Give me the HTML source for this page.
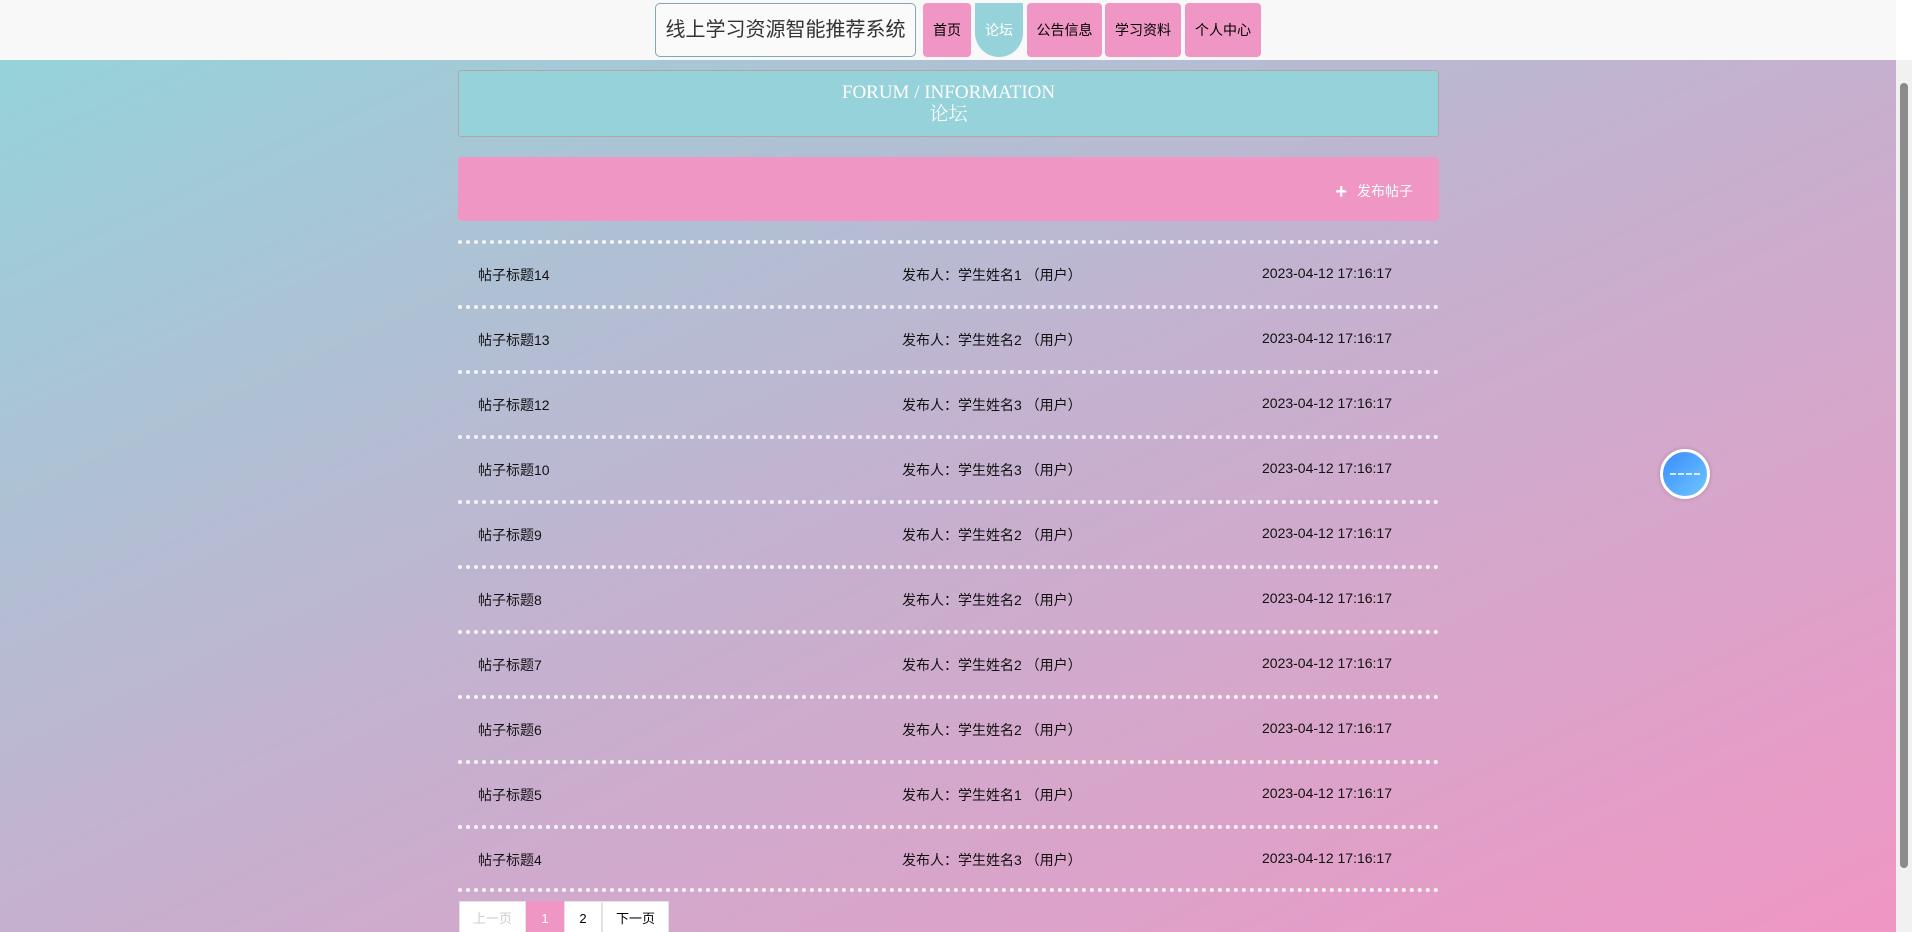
<!DOCTYPE html>
<html><head><meta charset="utf-8"><style>
*{margin:0;padding:0;box-sizing:border-box}
html,body{width:1912px;height:932px;overflow:hidden}
body{font-family:"Liberation Sans","Noto Sans CJK SC",sans-serif;background:#fff;position:relative}
.hdr{position:absolute;left:0;top:0;width:1896px;height:60px;background:#f8f8f8}
.title{position:absolute;left:655px;top:3px;width:261px;height:54px;border:1px solid #7fa9b0;border-radius:5px;font-size:20px;color:#333;text-align:center;line-height:52px;background:#fafafa}
.nav{position:absolute;top:3px;height:54px;background:#f096c4;border-radius:4px;font-size:14px;color:#000;text-align:center;line-height:54px}
.main{position:absolute;left:0;top:60px;width:1896px;height:872px;background:linear-gradient(155deg,#95d3da 0%,#c6b0cf 50%,#f096c4 100%)}
.fh{position:absolute;left:458px;top:10px;width:981px;height:67px;background:#96d2d9;border:1px solid #b0a5a8;border-radius:3px;color:#fff;text-align:center;font-family:"Liberation Serif","Noto Serif CJK SC",serif;font-size:19px;line-height:22px;padding-top:11px}
.pink{position:absolute;left:458px;top:97px;width:981px;height:64px;background:#f096c4;border-radius:4px;color:#fff;font-size:14px}
.pink span{position:absolute;right:26px;top:24px}
.dot{position:absolute;left:458px;width:981px;border-top:4px dotted #f4f4f4}
.row{position:absolute;left:0;width:1896px;font-size:14px;color:#111}
.row span{position:absolute}
.pg{position:absolute;top:901px;height:31px;background:#fff;border:1px solid #e4e4e4;border-bottom:none;font-size:13px;text-align:center;line-height:34px;overflow:hidden}
.sb{position:absolute;right:0;top:60px;width:16px;height:872px;background:#f1f1f1}
.thumb{position:absolute;right:4px;top:23px;width:8px;height:785px;background:#8a8a8a;border-radius:4px}
.fb{position:absolute;left:1660px;top:449px;width:50px;height:50px;border-radius:50%;background:linear-gradient(135deg,#3a8cff,#6ec6ff);border:3px solid #fff;box-shadow:0 0 4px rgba(0,0,0,.2)}
.fb i{position:absolute;left:7px;right:7px;top:21px;border-top:2px dashed #d6ecff}
</style></head><body>
<div class="hdr">
<div class="title">线上学习资源智能推荐系统</div>
<div class="nav" style="left:923px;width:48px">首页</div>
<div class="nav" style="left:975px;width:48px;background:#96d2d9;color:#fff;border-radius:0 0 24px 24px">论坛</div>
<div class="nav" style="left:1027px;width:75px">公告信息</div>
<div class="nav" style="left:1105px;width:76px">学习资料</div>
<div class="nav" style="left:1185px;width:76px">个人中心</div>
</div>
<div class="main">
<div class="fh">FORUM / INFORMATION<br>论坛</div>
<div class="pink"><span><b style="font-size:20px;vertical-align:-2px;margin-right:10px">+</b>发布帖子</span></div>
</div>
<div class="dot" style="top:240px"></div><div class="row" style="top:265px"><span style="left:478px">帖子标题14</span><span style="left:902px">发布人：学生姓名1 （用户）</span><span style="left:1262px">2023-04-12 17:16:17</span></div>
<div class="dot" style="top:305px"></div><div class="row" style="top:330px"><span style="left:478px">帖子标题13</span><span style="left:902px">发布人：学生姓名2 （用户）</span><span style="left:1262px">2023-04-12 17:16:17</span></div>
<div class="dot" style="top:370px"></div><div class="row" style="top:395px"><span style="left:478px">帖子标题12</span><span style="left:902px">发布人：学生姓名3 （用户）</span><span style="left:1262px">2023-04-12 17:16:17</span></div>
<div class="dot" style="top:435px"></div><div class="row" style="top:460px"><span style="left:478px">帖子标题10</span><span style="left:902px">发布人：学生姓名3 （用户）</span><span style="left:1262px">2023-04-12 17:16:17</span></div>
<div class="dot" style="top:500px"></div><div class="row" style="top:525px"><span style="left:478px">帖子标题9</span><span style="left:902px">发布人：学生姓名2 （用户）</span><span style="left:1262px">2023-04-12 17:16:17</span></div>
<div class="dot" style="top:565px"></div><div class="row" style="top:590px"><span style="left:478px">帖子标题8</span><span style="left:902px">发布人：学生姓名2 （用户）</span><span style="left:1262px">2023-04-12 17:16:17</span></div>
<div class="dot" style="top:630px"></div><div class="row" style="top:655px"><span style="left:478px">帖子标题7</span><span style="left:902px">发布人：学生姓名2 （用户）</span><span style="left:1262px">2023-04-12 17:16:17</span></div>
<div class="dot" style="top:695px"></div><div class="row" style="top:720px"><span style="left:478px">帖子标题6</span><span style="left:902px">发布人：学生姓名2 （用户）</span><span style="left:1262px">2023-04-12 17:16:17</span></div>
<div class="dot" style="top:760px"></div><div class="row" style="top:785px"><span style="left:478px">帖子标题5</span><span style="left:902px">发布人：学生姓名1 （用户）</span><span style="left:1262px">2023-04-12 17:16:17</span></div>
<div class="dot" style="top:825px"></div><div class="row" style="top:850px"><span style="left:478px">帖子标题4</span><span style="left:902px">发布人：学生姓名3 （用户）</span><span style="left:1262px">2023-04-12 17:16:17</span></div>
<div class="dot" style="top:888px"></div>
<div class="pg" style="left:459px;width:67px;color:#ccc">上一页</div>
<div class="pg" style="left:526px;width:38px;background:#f096c4;border-color:#f096c4;color:#fff">1</div>
<div class="pg" style="left:564px;width:38px">2</div>
<div class="pg" style="left:602px;width:67px">下一页</div>
<div class="fb"><i></i></div>
<div class="sb"><div class="thumb"></div></div>
</body></html>
